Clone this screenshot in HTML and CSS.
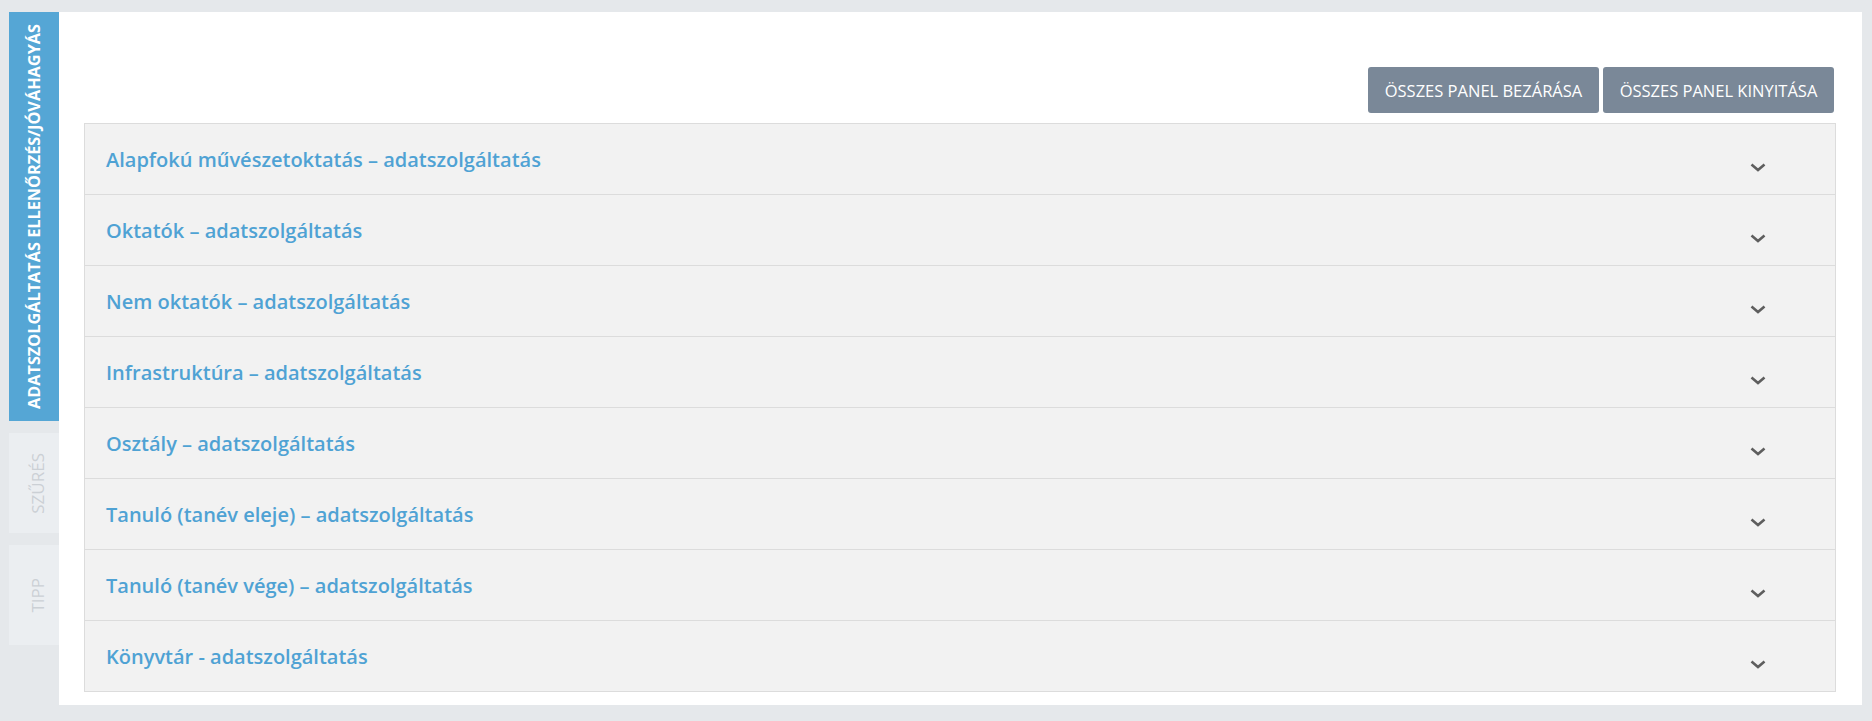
FILE: index.html
```html
<!DOCTYPE html>
<html lang="hu">
<head>
<meta charset="utf-8">
<title>Adatszolgáltatás</title>
<link rel="stylesheet" href="styles.css">
</head>
<body>
<div class="layout">
  <nav class="sidebar">
    <div class="tab tab-active"><span class="tab-label">Adatszolgáltatás ellenőrzés/jóváhagyás</span></div>
    <div class="tab tab-muted"><span class="tab-label">Szűrés</span></div>
    <div class="tab tab-muted"><span class="tab-label">Tipp</span></div>
  </nav>
  <main class="panel">
    <div class="toolbar">
      <button class="btn">Összes panel bezárása</button>
      <button class="btn">Összes panel kinyitása</button>
    </div>
    <div class="accordion">
      <div class="row"><span class="row-title">Alapfokú művészetoktatás – adatszolgáltatás</span><svg class="chev" viewBox="0 0 16 9"><path d="M1.5 1.5 L8 7 L14.5 1.5"/></svg></div>
      <div class="row"><span class="row-title">Oktatók – adatszolgáltatás</span><svg class="chev" viewBox="0 0 16 9"><path d="M1.5 1.5 L8 7 L14.5 1.5"/></svg></div>
      <div class="row"><span class="row-title">Nem oktatók – adatszolgáltatás</span><svg class="chev" viewBox="0 0 16 9"><path d="M1.5 1.5 L8 7 L14.5 1.5"/></svg></div>
      <div class="row"><span class="row-title">Infrastruktúra – adatszolgáltatás</span><svg class="chev" viewBox="0 0 16 9"><path d="M1.5 1.5 L8 7 L14.5 1.5"/></svg></div>
      <div class="row"><span class="row-title">Osztály – adatszolgáltatás</span><svg class="chev" viewBox="0 0 16 9"><path d="M1.5 1.5 L8 7 L14.5 1.5"/></svg></div>
      <div class="row"><span class="row-title">Tanuló (tanév eleje) – adatszolgáltatás</span><svg class="chev" viewBox="0 0 16 9"><path d="M1.5 1.5 L8 7 L14.5 1.5"/></svg></div>
      <div class="row"><span class="row-title">Tanuló (tanév vége) – adatszolgáltatás</span><svg class="chev" viewBox="0 0 16 9"><path d="M1.5 1.5 L8 7 L14.5 1.5"/></svg></div>
      <div class="row"><span class="row-title">Könyvtár - adatszolgáltatás</span><svg class="chev" viewBox="0 0 16 9"><path d="M1.5 1.5 L8 7 L14.5 1.5"/></svg></div>
    </div>
  </main>
</div>
</body>
</html>
```
FILE: styles.css
```css
* { box-sizing: border-box; }
html, body { margin: 0; padding: 0; }
body {
  background: #e5e8eb;
  font-family: "Open Sans", "Noto Sans", sans-serif;
}
.layout {
  display: flex;
  height: 721px;
  padding: 12px 10px 16px 9px;
}
.sidebar {
  width: 50px;
  flex: 0 0 50px;
  display: flex;
  flex-direction: column;
  gap: 12px;
}
.tab {
  display: flex;
  align-items: center;
  justify-content: center;
}
.tab-label {
  writing-mode: vertical-rl;
  transform: rotate(180deg);
  text-transform: uppercase;
  white-space: nowrap;
}
.tab-active {
  height: 409px;
  background: #55a6d5;
  color: #fff;
  font-weight: 700;
  font-size: 16.3px;
}
.tab-muted {
  height: 100px;
  background: #ebeef1;
  color: #cbd0d5;
  font-size: 17px;
  padding-left: 6px;
}
.panel {
  flex: 1;
  background: #fff;
  padding: 55px 26px 11px 25px;
}
.toolbar {
  display: flex;
  justify-content: flex-end;
  gap: 4px;
  margin: 0 2px 10px 0;
}
.btn {
  width: 231px;
  height: 46px;
  border: 0;
  border-radius: 3px;
  background: #7a8898;
  color: #fff;
  font-family: "Open Sans", "Noto Sans", sans-serif;
  font-size: 16.5px;
  text-transform: uppercase;
  padding: 0;
}
.accordion {
  border: 1px solid #dcdcdc;
  background: #f2f2f2;
}
.row {
  height: 71px;
  display: flex;
  align-items: center;
  justify-content: space-between;
  padding: 0 69px 0 21px;
  border-bottom: 1px solid #dcdcdc;
}
.row:last-child { border-bottom: 0; height: 70px; }
.row-title {
  color: #4fa2d4;
  font-size: 20px;
  font-weight: 600;
}
.chev {
  width: 16px;
  height: 9px;
  margin-top: 17px;
  fill: none;
  stroke: #5e5e5e;
  stroke-width: 2.6;
}
```
